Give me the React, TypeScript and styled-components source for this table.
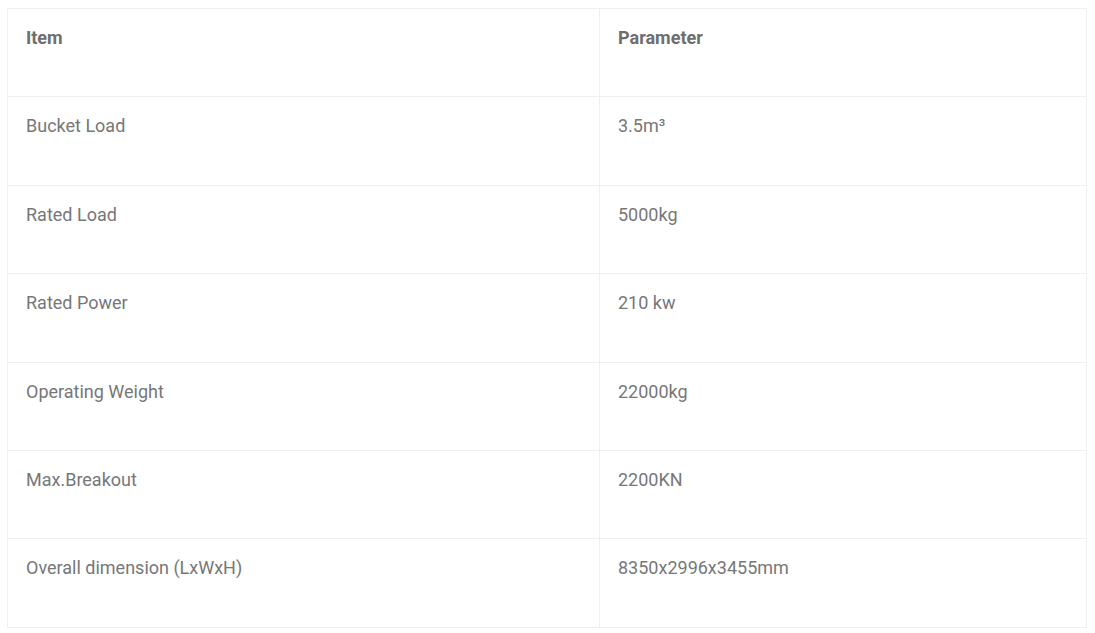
import React from "react";
import styled, { createGlobalStyle } from "styled-components";

const Global = createGlobalStyle`
  html, body { margin: 0; padding: 0; background: #fff; }
  body { font-family: Roboto, "Liberation Sans", sans-serif; }
`;

const Wrap = styled.div`
  padding: 8px 8px 0 7px;
`;

const Table = styled.table`
  width: 1080px;
  border-collapse: collapse;
  table-layout: fixed;
  font-family: Roboto, "Liberation Sans", sans-serif;
  font-size: 18px;
  color: #757575;
`;

const Row = styled.tr`
  height: 88.4px;
`;

const Cell = styled.td<{ $head?: boolean }>`
  border: 1px solid #efefef;
  vertical-align: top;
  padding: 17px 18px 0 18px;
  line-height: 24px;
  font-weight: ${(p) => (p.$head ? 700 : 400)};
  color: ${(p) => (p.$head ? "#6e6e6e" : "#777777")};
`;

const rows: [string, string][] = [
  ["Bucket Load", "3.5m³"],
  ["Rated Load", "5000kg"],
  ["Rated Power", "210 kw"],
  ["Operating Weight", "22000kg"],
  ["Max.Breakout", "2200KN"],
  ["Overall dimension (LxWxH)", "8350x2996x3455mm"],
];

export default function App() {
  return (
    <>
      <Global />
      <Wrap>
        <Table>
          <colgroup>
            <col style={{ width: 592 }} />
            <col />
          </colgroup>
          <tbody>
            <Row>
              <Cell $head>Item</Cell>
              <Cell $head>Parameter</Cell>
            </Row>
            {rows.map(([a, b]) => (
              <Row key={a}>
                <Cell>{a}</Cell>
                <Cell>{b}</Cell>
              </Row>
            ))}
          </tbody>
        </Table>
      </Wrap>
    </>
  );
}
